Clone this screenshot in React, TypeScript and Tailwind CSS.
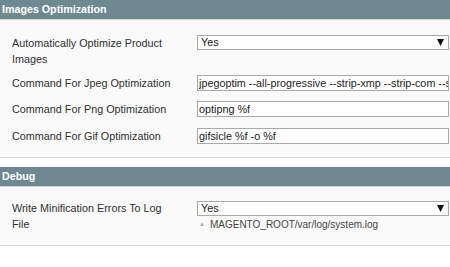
const font = { fontFamily: '"Liberation Sans", Arial, sans-serif' };

function SectionHead({ title }: { title: string }) {
  return (
    <div className="h-[20px] border-b border-[#d6d6d6] bg-[#6f8992] pl-[2px] text-[10.7px] font-bold leading-[19px] text-white">
      {title}
    </div>
  );
}

function FakeSelect({ value }: { value: string }) {
  return (
    <div className="flex h-[15px] w-[252px] items-center justify-between border border-[#aaa] bg-white pl-[3px] pr-[4px] text-[10.8px] leading-[13px] text-[#222]">
      <span>{value}</span>
      <svg width="7" height="7" viewBox="0 0 7 7">
        <path d="M0 0 H7 L3.5 7 Z" fill="#111" />
      </svg>
    </div>
  );
}

function TextInput({ value }: { value: string }) {
  return (
    <div className="h-[16px] w-[252px] overflow-hidden whitespace-nowrap border border-[#aaa] bg-white pl-[1px] text-[10.8px] leading-[14px] text-[#222]">
      {value}
    </div>
  );
}

function Row({ label, children, className }: { label: string; children: React.ReactNode; className?: string }) {
  return (
    <div className={'flex items-start ' + (className ?? '')}>
      <div className="w-[176px] shrink-0 pl-[12px] text-[10.8px] leading-[16px] text-[#2f2f2f]">{label}</div>
      <div className="ml-[21px]">{children}</div>
    </div>
  );
}

export default function App() {
  return (
    <div className="h-[267px] w-[450px] overflow-hidden bg-white" style={font}>
      <SectionHead title="Images Optimization" />
      <div className="border-b border-[#d6d6d6] bg-[#fafafa] pb-[13px] pt-[15px]">
        <Row label="Automatically Optimize Product Images">
          <div>
            <FakeSelect value="Yes" />
          </div>
        </Row>
        <Row label="Command For Jpeg Optimization" className="mt-[8px]">
          <TextInput value="jpegoptim --all-progressive --strip-xmp --strip-com --strip-exif --strip-iptc -o %f" />
        </Row>
        <Row label="Command For Png Optimization" className="mt-[10px]">
          <TextInput value="optipng %f" />
        </Row>
        <Row label="Command For Gif Optimization" className="mt-[11px]">
          <TextInput value="gifsicle %f -o %f" />
        </Row>
      </div>
      <div className="h-[9px]" />
      <SectionHead title="Debug" />
      <div className="border-b border-[#d6d6d6] bg-[#fafafa] pb-[13px] pt-[13px]">
        <Row label="Write Minification Errors To Log File">
          <div className="pt-[1px]">
            <FakeSelect value="Yes" />
            <div className="mt-[2px] flex items-center text-[10px] leading-[13px] text-[#444]">
              <span className="ml-[2px] mr-[5px] text-[6px] text-[#aaa]">▲</span>
              MAGENTO_ROOT/var/log/system.log
            </div>
          </div>
        </Row>
      </div>
    </div>
  );
}
